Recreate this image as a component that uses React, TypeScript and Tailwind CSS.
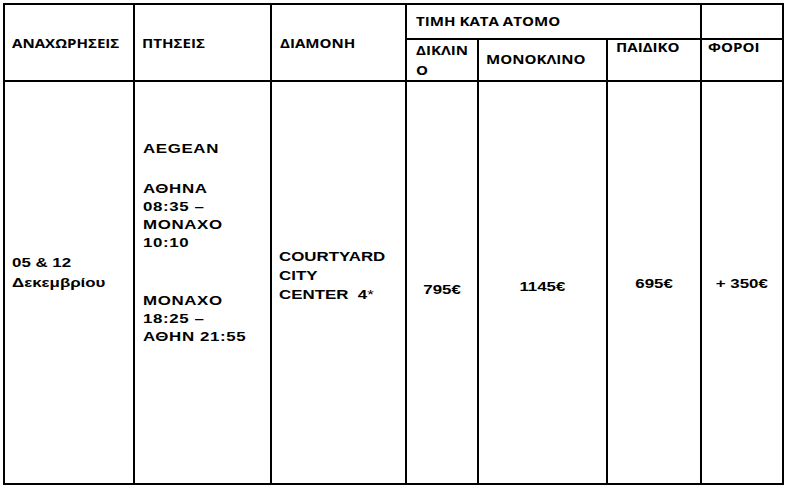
import React from "react";

// Text in the source is stretched horizontally, so glyphs get a small x-scale.
function Wide({
  children,
  head,
  center,
}: {
  children: React.ReactNode;
  head?: boolean;
  center?: boolean;
}) {
  const scale = head ? "scale-x-[1.16]" : "scale-x-[1.25]";
  const origin = center ? "origin-center" : "origin-left";
  return (
    <span className={`inline-block whitespace-nowrap ${scale} ${origin}`}>
      {children}
    </span>
  );
}

const cell = "border-r-2 border-b-2 border-black";
const head = "font-['Open_Sans',sans-serif] font-bold text-[13px] text-black";
const body = "font-['Liberation_Sans',Arial,sans-serif] font-bold text-[13.5px] text-black";

export default function App() {
  return (
    <div className="w-[792px] h-[492px] bg-white pt-[3px] pl-[3px]">
      <div className="grid grid-cols-[130px_137px_135px_72px_129px_94px_82px] grid-rows-[35px_42px_403px] w-max border-l-2 border-t-2 border-black">
        {/* header rows */}
        <div className={`${cell} ${head} row-span-2 flex items-center pl-[7px] pt-[2px]`}>
          <Wide head>ΑΝΑΧΩΡΗΣΕΙΣ</Wide>
        </div>
        <div className={`${cell} ${head} row-span-2 flex items-center pl-[7px] pt-[2px]`}>
          <Wide head>ΠΤΗΣΕΙΣ</Wide>
        </div>
        <div className={`${cell} ${head} row-span-2 flex items-center pl-[8px] pt-[2px]`}>
          <Wide head>ΔΙΑΜΟΝΗ</Wide>
        </div>
        <div className={`${cell} ${head} col-span-3 flex items-center pl-[9px]`}>
          <Wide head>ΤΙΜΗ ΚΑΤΑ ΑΤΟΜΟ</Wide>
        </div>
        <div className={cell} />

        <div className={`${cell} ${head} pl-[9px] leading-[20px]`}>
          <Wide head>
            ΔΙΚΛΙΝ
            <br />Ο
          </Wide>
        </div>
        <div className={`${cell} ${head} flex items-center pl-[7px]`}>
          <Wide head>ΜΟΝΟΚΛΙΝΟ</Wide>
        </div>
        <div className={`${cell} ${head} pl-[8px] pt-px leading-[12px]`}>
          <Wide head>ΠΑΙΔΙΚΟ</Wide>
        </div>
        <div className={`${cell} ${head} pl-[6px] pt-px leading-[12px]`}>
          <Wide head>ΦΟΡΟΙ</Wide>
        </div>

        {/* body */}
        <div className={`${cell} ${body} pl-[7px] pt-[171px] leading-[19.5px]`}>
          <Wide>
            05 &amp; 12
            <br />
            Δεκεμβρίου
          </Wide>
        </div>
        <div className={`${cell} ${body} pl-[8px] pt-[58px] leading-[18px] tracking-[0.5px]`}>
          <Wide>AEGEAN</Wide>
          <div className="mt-[22px]">
            <Wide>
              ΑΘΗΝΑ
              <br />
              08:35 –
              <br />
              ΜΟΝΑΧΟ
              <br />
              10:10
            </Wide>
          </div>
          <div className="mt-[40px]">
            <Wide>
              ΜΟΝΑΧΟ
              <br />
              18:25 –
              <br />
              ΑΘΗΝ 21:55
            </Wide>
          </div>
        </div>
        <div className={`${cell} ${body} pl-[7px] pt-[165px] leading-[19px]`}>
          <Wide>
            COURTYARD
            <br />
            CITY
            <br />
            CENTER&nbsp; 4<span className="font-normal">*</span>
          </Wide>
        </div>
        <div className={`${cell} ${body} text-center pt-[198px] leading-[19px]`}>
          <Wide center>795€</Wide>
        </div>
        <div className={`${cell} ${body} text-center pt-[195px] leading-[19px]`}>
          <Wide center>1145€</Wide>
        </div>
        <div className={`${cell} ${body} text-center pt-[192px] leading-[19px]`}>
          <Wide center>695€</Wide>
        </div>
        <div className={`${cell} ${body} text-center pt-[192px] leading-[19px]`}>
          <Wide center>+ 350€</Wide>
        </div>
      </div>
    </div>
  );
}
